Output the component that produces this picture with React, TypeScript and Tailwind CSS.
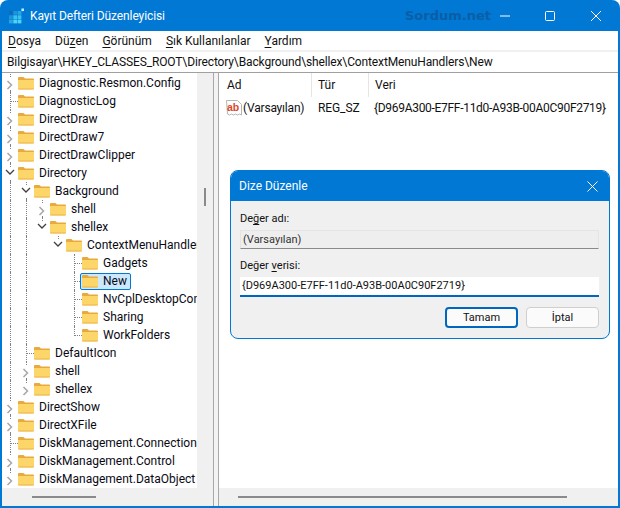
type Guide = "" | "line" | "leaf" | "end";

type TreeRow = {
  label: string;
  guides: Guide[];
  expander?: "open" | "closed";
  selected?: boolean;
  last?: boolean;
};

const rows: TreeRow[] = [
  { label: "Diagnostic.Resmon.Config", guides: [], expander: "closed" },
  { label: "DiagnosticLog", guides: ["leaf"] },
  { label: "DirectDraw", guides: [], expander: "closed" },
  { label: "DirectDraw7", guides: [], expander: "closed" },
  { label: "DirectDrawClipper", guides: [], expander: "closed" },
  { label: "Directory", guides: [], expander: "open" },
  { label: "Background", guides: ["line"], expander: "open" },
  { label: "shell", guides: ["line", "line"], expander: "closed" },
  { label: "shellex", guides: ["line", "line"], expander: "open", last: true },
  { label: "ContextMenuHandlers", guides: ["line", "line", ""], expander: "open", last: true },
  { label: "Gadgets", guides: ["line", "line", "", "", "leaf"] },
  { label: "New", guides: ["line", "line", "", "", "leaf"], selected: true },
  { label: "NvCplDesktopContext", guides: ["line", "line", "", "", "leaf"] },
  { label: "Sharing", guides: ["line", "line", "", "", "leaf"] },
  { label: "WorkFolders", guides: ["line", "line", "", "", "end"] },
  { label: "DefaultIcon", guides: ["line", "leaf"] },
  { label: "shell", guides: ["line"], expander: "closed" },
  { label: "shellex", guides: ["line"], expander: "closed", last: true },
  { label: "DirectShow", guides: [], expander: "closed" },
  { label: "DirectXFile", guides: [], expander: "closed" },
  { label: "DiskManagement.Connection", guides: ["leaf"] },
  { label: "DiskManagement.Control", guides: [], expander: "closed" },
  { label: "DiskManagement.DataObject", guides: [], expander: "closed", last: true },
];

const FolderIcon = () => (
  <svg width="16" height="14" viewBox="0 0 16 14" className="shrink-0">
    <path d="M0 2a1 1 0 0 1 1-1h4.5l1.5 1.5h8a1 1 0 0 1 1 1V5H0z" fill="#e9a93c" />
    <path d="M0 4h16v8.5a1 1 0 0 1-1 1H1a1 1 0 0 1-1-1z" fill="#fdd66a" />
    <path d="M0 12.4h16v.1a1 1 0 0 1-1 1H1a1 1 0 0 1-1-1z" fill="#eeb44c" />
  </svg>
);

const Expander = ({ open, last }: { open: boolean; last?: boolean }) => (
  <div className="flex flex-col items-center w-4 h-[18px] shrink-0">
    <div className="h-[3px] border-l border-dotted border-[#808080]" />
    {open ? (
      <svg width="10" height="8" viewBox="0 0 10 8" className="mt-[2px]">
        <path d="M1 1l4 4 4-4" fill="none" stroke="#404040" strokeWidth="1.3" />
      </svg>
    ) : (
      <svg width="8" height="10" viewBox="0 0 8 10" className="mt-[3px]">
        <path d="M1.5 1l4 4-4 4" fill="none" stroke="#a6a6a6" strokeWidth="1.5" />
      </svg>
    )}
    {!last && <div className="mt-auto h-[2px] border-l border-dotted border-[#808080]" />}
  </div>
);

const GuideCell = ({ kind }: { kind: Guide }) => (
  <div className="w-4 h-[18px] shrink-0 pl-2">
    {kind === "line" && <div className="h-full border-l border-dotted border-[#808080]" />}
    {kind === "leaf" && (
      <div className="h-full border-l border-dotted border-[#808080]">
        <div className="h-[10px] border-b border-dotted border-[#808080]" />
      </div>
    )}
    {kind === "end" && (
      <div className="h-[10px] border-l border-b border-dotted border-[#808080]" />
    )}
  </div>
);

const TreeItem = ({ row }: { row: TreeRow }) => (
  <div className="flex items-center h-[18px] whitespace-nowrap">
    {row.guides.map((kind, i) => (
      <GuideCell key={i} kind={kind} />
    ))}
    {row.expander && <Expander open={row.expander === "open"} last={row.last} />}
    <div
      className={
        row.selected
          ? "flex items-center h-[17px] pr-[3px] -ml-[2px] pl-[1px] rounded-[2px] border border-[#0078d4] bg-[#cce8ff]"
          : "flex items-center h-[17px]"
      }
    >
      <FolderIcon />
      <span className="ml-[5px] text-[#0a0a14]">{row.label}</span>
    </div>
  </div>
);

const RegEditIcon = () => (
  <svg width="16" height="16" viewBox="0 0 16 16" className="shrink-0">
    <rect x="0" y="3" width="3.8" height="3.8" fill="#0f6cb8" />
    <rect x="4.3" y="3" width="3.8" height="3.8" fill="#1d93d8" />
    <rect x="8.6" y="3" width="3.8" height="3.8" fill="#27a8e0" />
    <rect x="0" y="7.3" width="3.8" height="3.8" fill="#1d93d8" />
    <rect x="4.3" y="7.3" width="3.8" height="3.8" fill="#37c3ee" />
    <rect x="8.6" y="7.3" width="3.8" height="3.8" fill="#37c3ee" />
    <rect x="0" y="11.6" width="3.8" height="3.8" fill="#27a8e0" />
    <rect x="4.3" y="11.6" width="3.8" height="3.8" fill="#50d4f4" />
    <rect x="8.6" y="11.6" width="3.8" height="3.8" fill="#50d4f4" />
    <rect x="12.4" y="0.5" width="2.6" height="2.6" fill="#bff0ff" />
  </svg>
);

const StringValueIcon = () => (
  <svg width="16" height="16" viewBox="0 0 16 16" className="shrink-0">
    <path d="M0.5 0.5h11l4 4v10.5l-2-1-2 1-2-1-2 1-2-1-2 1-2-1z" fill="#fff" stroke="#b5b5b5" />
    <text x="1" y="10.5" fontFamily="Liberation Sans" fontWeight="700" fontSize="10.5" fill="#d9472b">
      ab
    </text>
  </svg>
);

const MenuLabel = ({ before, mark, after }: { before?: string; mark: string; after: string }) => (
  <span>
    {before}
    <span className="underline underline-offset-2">{mark}</span>
    {after}
  </span>
);

export default function App() {
  return (
    <div className="w-[620px] h-[508px] overflow-hidden bg-white font-['Roboto',sans-serif] text-[12px] leading-[18px] text-[#111]">
      <div className="relative flex flex-col h-full rounded-t-[8px] overflow-hidden bg-[#0078d4] px-[2px] pb-[2px]">
        {/* title bar */}
        <div className="flex items-center h-[31px] shrink-0 -mx-[2px] pl-[9px] text-white">
          <RegEditIcon />
          <span className="ml-[5px] text-[12px] tracking-[-0.1px]">Kayıt Defteri Düzenleyicisi</span>
          <span className="ml-[240px] w-[86px] font-['DejaVu_Sans',sans-serif] font-bold text-[13px] text-[#0b5ea6] whitespace-nowrap">
            Sordum.net
          </span>
          <svg width="10" height="10" viewBox="0 0 10 10" className="ml-[9px]">
            <path d="M0 5h10" stroke="#fff" />
          </svg>
          <svg width="10" height="10" viewBox="0 0 10 10" className="ml-[35px]">
            <rect x="0.5" y="0.5" width="9" height="9" rx="1" fill="none" stroke="#fff" />
          </svg>
          <svg width="10" height="10" viewBox="0 0 10 10" className="ml-[36px]">
            <path d="M0 0l10 10M10 0L0 10" stroke="#fff" />
          </svg>
        </div>

        {/* menu */}
        <div className="flex items-center gap-[14px] h-[19px] shrink-0 pl-[6px] bg-white">
          <MenuLabel mark="D" after="osya" />
          <MenuLabel before="Dü" mark="z" after="en" />
          <MenuLabel mark="G" after="örünüm" />
          <MenuLabel mark="S" after="ık Kullanılanlar" />
          <MenuLabel mark="Y" after="ardım" />
        </div>

        {/* address bar */}
        <div className="h-[23px] shrink-0 pt-[2px] bg-[#f0f0f0]">
          <div className="h-[21px] pl-[5px] bg-white border-b border-[#a0a0a0] whitespace-nowrap leading-[20px] tracking-[-0.13px]">
            Bilgisayar\HKEY_CLASSES_ROOT\Directory\Background\shellex\ContextMenuHandlers\New
          </div>
        </div>

        {/* panes */}
        <div className="flex flex-1 min-h-0 bg-[#f0f0f0]">
          <div className="flex flex-col w-[211px] shrink-0">
            <div className="flex flex-1 min-h-0">
              <div className="w-[195px] pt-[1px] shrink-0 overflow-hidden bg-white">
                {rows.map((row, i) => (
                  <TreeItem key={i} row={row} />
                ))}
              </div>
              <div className="w-4 pl-[7px] pt-[115px] bg-[#f0f0f0]">
                <div className="w-[2px] h-[18px] bg-[#8a8a8a]" />
              </div>
            </div>
            <div className="flex items-center h-[18px] shrink-0 pl-[30px] bg-[#f0f0f0]">
              <div className="w-16 h-[2px] bg-[#8a8a8a]" />
            </div>
          </div>

          <div className="w-[6px] shrink-0 border-x border-[#a8a8a8] bg-[#f3f3f3]" />

          <div className="flex flex-col flex-1 min-w-0 bg-white">
            <div className="flex-1 min-h-0">
              <div className="flex h-[24px] items-center">
                <div className="w-[93px] pl-[8px] h-full leading-[25px] border-r border-[#e5e5e5]">Ad</div>
                <div className="w-[57px] pl-[6px] h-full leading-[25px] border-r border-[#e5e5e5]">Tür</div>
                <div className="pl-[6px] h-full leading-[25px]">Veri</div>
              </div>
              <div className="flex items-center h-[22px] whitespace-nowrap">
                <div className="flex items-center w-[92px] pl-[7px]">
                  <StringValueIcon />
                  <span className="ml-[1px] tracking-[-0.2px]">(Varsayılan)</span>
                </div>
                <div className="w-[57px] pl-[7px] tracking-[-0.1px]">REG_SZ</div>
                <div className="pl-[6px] tracking-[-0.3px]">{"{D969A300-E7FF-11d0-A93B-00A0C90F2719}"}</div>
              </div>
            </div>
            <div className="flex items-center h-[18px] shrink-0 pl-[19px] bg-[#f0f0f0]">
              <div className="w-[329px] h-[2px] bg-[#8a8a8a]" />
            </div>
          </div>
        </div>

        {/* edit string dialog */}
        <div className="absolute left-[230px] top-[170px] w-[380px] h-[169px] rounded-[8px] overflow-hidden border border-[#0078d4] bg-[#f0f0f0] shadow-[0_0_0_1px_#ffffff] text-[11px]">
          <div className="flex items-center justify-between h-[30px] pl-[8px] pr-[11px] bg-[#0078d4] text-white">
            <span className="text-[12px]">Dize Düzenle</span>
            <svg width="11" height="11" viewBox="0 0 11 11">
              <path d="M0.5 0.5l10 10M10.5 0.5l-10 10" stroke="#fff" />
            </svg>
          </div>
          <div className="flex flex-col pl-[9px] pr-[10px] pt-[9px]">
            <span className="h-[18px]">
              De<span className="underline underline-offset-2">ğ</span>er adı:
            </span>
            <div className="mt-[2px] h-[19px] pl-[2px] leading-[18px] bg-[#eeeeee] border-x border-t border-[#e4e4e4] border-b border-b-[#8a8a8a] text-[#333]">
              (Varsayılan)
            </div>
            <span className="mt-[8px] h-[18px]">
              Değer <span className="underline underline-offset-2">v</span>erisi:
            </span>
            <div className="mt-[2px] h-[20px] pl-[2px] leading-[18px] bg-white border-b-2 border-[#0067c0]">
              {"{D969A300-E7FF-11d0-A93B-00A0C90F2719}"}
            </div>
            <div className="flex justify-end gap-2 mt-[10px]">
              <button className="w-[73px] h-[21px] rounded-[4px] border-2 border-[#0067c0] bg-[#fbfbfb] leading-[16px]">
                Tamam
              </button>
              <button className="w-[73px] h-[21px] rounded-[4px] border border-[#cfcfcf] bg-[#fbfbfb] leading-[18px]">
                İptal
              </button>
            </div>
          </div>
        </div>
      </div>
    </div>
  );
}
